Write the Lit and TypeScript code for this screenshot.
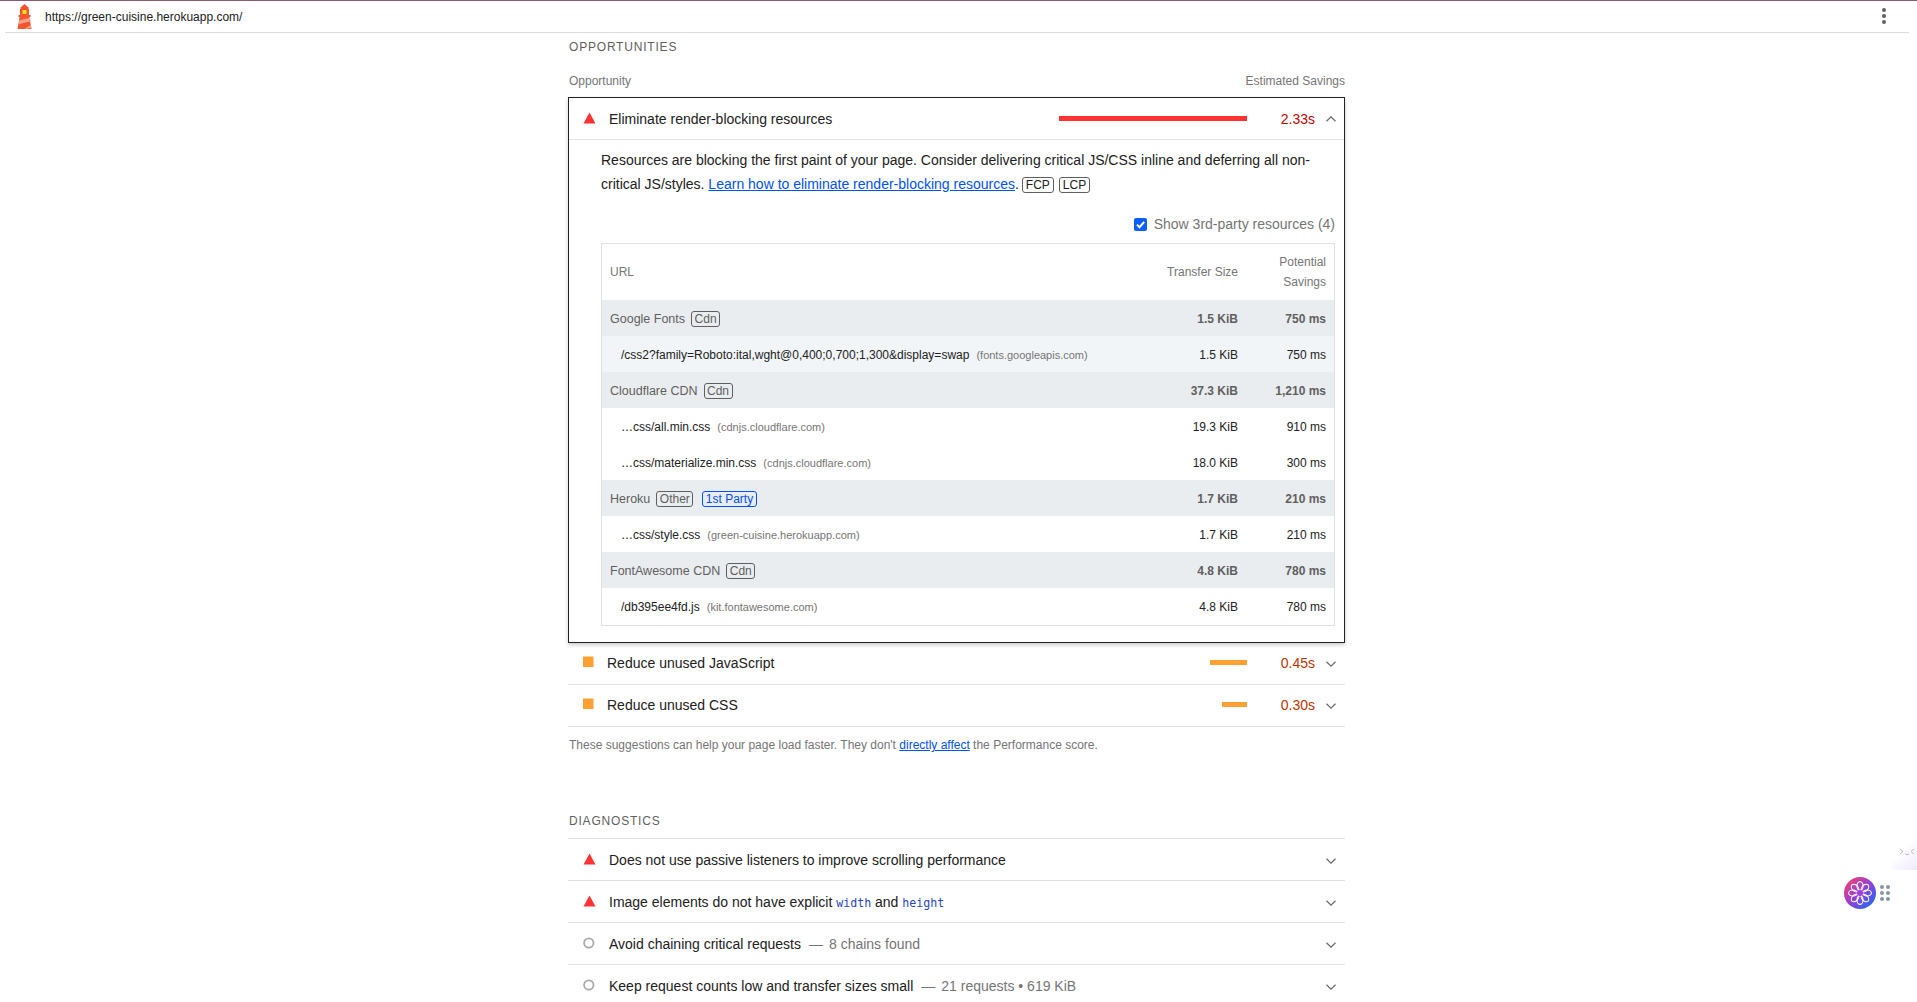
import { LitElement, html, css, svg } from 'lit';
import { customElement } from 'lit/decorators.js';

const triangle = html`<svg class="icon" width="14" height="12" viewBox="0 0 14 12"><path d="M6.5 0.5 L12.5 11.5 H0.5 Z" fill="#ff3333" /></svg>`;
const square = html`<svg class="icon" width="14" height="12" viewBox="0 0 14 12"><rect x="0" y="0.5" width="10.5" height="10.5" fill="#ffa033" /></svg>`;
const circle = html`<svg class="icon" width="14" height="12" viewBox="0 0 14 12"><circle cx="5.8" cy="6" r="4.7" fill="none" stroke="#aaaaaa" stroke-width="1.8" /></svg>`;

const chevron = (up = false) =>
  html`<svg class="chev" width="12" height="8" viewBox="0 0 12 8"><path d="${up ? 'M1.5 6.2 L6 1.8 L10.5 6.2' : 'M1.5 1.8 L6 6.2 L10.5 1.8'}" fill="none" stroke="#6a6a6a" stroke-width="1.2" /></svg>`;

interface Row {
  kind: 'group' | 'item';
  label: string;
  host?: string;
  tags?: string[];
  size: string;
  savings: string;
  hover?: boolean;
}

const rows: Row[] = [
  { kind: 'group', label: 'Google Fonts', tags: ['Cdn'], size: '1.5 KiB', savings: '750 ms' },
  { kind: 'item', label: '/css2?family=Roboto:ital,wght@0,400;0,700;1,300&display=swap', host: '(fonts.googleapis.com)', size: '1.5 KiB', savings: '750 ms', hover: true },
  { kind: 'group', label: 'Cloudflare CDN', tags: ['Cdn'], size: '37.3 KiB', savings: '1,210 ms' },
  { kind: 'item', label: '…css/all.min.css', host: '(cdnjs.cloudflare.com)', size: '19.3 KiB', savings: '910 ms' },
  { kind: 'item', label: '…css/materialize.min.css', host: '(cdnjs.cloudflare.com)', size: '18.0 KiB', savings: '300 ms' },
  { kind: 'group', label: 'Heroku', tags: ['Other', '1st Party'], size: '1.7 KiB', savings: '210 ms' },
  { kind: 'item', label: '…css/style.css', host: '(green-cuisine.herokuapp.com)', size: '1.7 KiB', savings: '210 ms' },
  { kind: 'group', label: 'FontAwesome CDN', tags: ['Cdn'], size: '4.8 KiB', savings: '780 ms' },
  { kind: 'item', label: '/db395ee4fd.js', host: '(kit.fontawesome.com)', size: '4.8 KiB', savings: '780 ms' },
];

@customElement('app-root')
export class AppRoot extends LitElement {
  static styles = css`
    :host {
      display: block;
      position: relative;
      height: 1002px;
      overflow: hidden;
      background: #fff;
      font-family: 'Liberation Sans', Arial, sans-serif;
      color: #212121;
    }
    * {
      box-sizing: border-box;
    }
    a {
      color: #0051ff;
      text-decoration: underline;
    }
    .topline {
      height: 1px;
      background: #8a5a70;
    }
    .toolbar {
      height: 32px;
      margin: 0 8px 0 5px;
      border-bottom: 1px solid #dcdcdc;
      display: flex;
      align-items: center;
      padding: 0 0 1px 11px;
      font-size: 12px;
    }
    .url {
      margin-left: 12px;
      padding-top: 2px;
      color: #212121;
    }
    .menu {
      margin-left: auto;
      margin-right: 23px;
      display: flex;
      flex-direction: column;
      gap: 2px;
    }
    .menu i {
      width: 4px;
      height: 4px;
      border-radius: 50%;
      background: #5f5f5f;
    }
    .main {
      width: 777px;
      margin-left: 568px;
    }
    .section-title {
      font-size: 12px;
      letter-spacing: 0.8px;
      color: #5f5f5f;
      line-height: 16px;
      padding-left: 1px;
    }
    .first-title {
      margin-top: 6px;
    }
    .columns {
      display: flex;
      justify-content: space-between;
      font-size: 12px;
      color: #757575;
      line-height: 16px;
      margin-top: 18px;
      height: 24px;
      padding-left: 1px;
    }
    .box {
      border: 1px solid #212121;
      box-shadow: 0 2px 4px rgba(0, 0, 0, 0.2);
      height: 546px;
    }
    .row {
      display: flex;
      align-items: center;
      height: 42px;
      font-size: 14px;
      border-bottom: 1px solid #e0e0e0;
      padding-left: 15px;
    }
    .row .icon {
      flex: none;
      margin-right: 10px;
      position: relative;
      top: -1px;
    }
    .opp .row {
      padding-bottom: 2px;
    }
    .box .row {
      height: 42px;
      padding-left: 14px;
    }
    .box .row .icon {
      margin-right: 12px;
    }
    .diag {
      border-top: 1px solid #e0e0e0;
      margin-top: 9px;
    }
    .diag .row .icon {
      margin-right: 12px;
    }
    .bar-wrap {
      margin-left: auto;
      width: 188px;
      display: flex;
      justify-content: flex-end;
    }
    .bar {
      height: 5px;
    }
    .value {
      width: 68px;
      text-align: right;
    }
    .red {
      color: #cc0000;
    }
    .orange {
      color: #c33300;
    }
    .chev {
      margin-left: auto;
      margin-right: 8px;
      flex: none;
    }
    .value + .chev {
      margin-left: 10px;
    }
    .row .chev {
      position: relative;
      top: 1px;
    }
    .box .chev {
      margin-right: 7px;
    }
    .box .value + .chev {
      margin-left: 10px;
      top: 0;
    }
    .detail {
      padding: 8px 9px 0 32px;
    }
    .desc {
      font-size: 14px;
      line-height: 24px;
      margin: 0;
      height: 48px;
    }
    .desc span.line {
      display: block;
    }
    .tag {
      display: inline-block;
      border: 1px solid #5f5f5f;
      border-radius: 3px;
      font-size: 12px;
      line-height: 14px;
      height: 16px;
      padding: 0 3px;
      color: #212121;
    }
    .desc .tag {
      margin-left: 3px;
      margin-right: 2px;
    }
    .toggle {
      display: flex;
      justify-content: flex-end;
      align-items: center;
      gap: 7px;
      font-size: 14px;
      color: #757575;
      height: 20px;
      margin-top: 18px;
    }
    .check {
      width: 13px;
      height: 13px;
      border-radius: 2px;
      background: #0b5fff;
      display: flex;
    }
    .table {
      margin-top: 9px;
      border: 1px solid #e0e0e0;
      width: 734px;
      height: 383px;
      font-size: 12px;
    }
    .thead,
    .tr {
      display: flex;
      align-items: center;
      padding-left: 8px;
    }
    .thead {
      height: 56px;
      padding-bottom: 1px;
      color: #757575;
      line-height: 20px;
    }
    .tr {
      height: 36px;
      padding-top: 1px;
    }
    .tr.group {
      background: #eaedef;
      color: #5f5f5f;
    }
    .tr.group .name {
      font-size: 12.5px;
    }
    .tr.hover {
      background: #f2f5f7;
    }
    .tr.item .name {
      padding-left: 11px;
      color: #212121;
    }
    .name {
      flex: 1;
      display: flex;
      align-items: center;
      white-space: nowrap;
    }
    .host {
      font-size: 11px;
      color: #757575;
      margin-left: 7px;
    }
    .tr .tag {
      margin-left: 6px;
      padding: 0 2.5px;
      color: #5f5f5f;
    }
    .tr .tag + .tag {
      margin-left: 9px;
    }
    .tr .tag.first {
      color: #0051ff;
      border-color: #0051ff;
    }
    .size {
      width: 100px;
      text-align: right;
      flex: none;
    }
    .save {
      width: 96px;
      padding-right: 8px;
      text-align: right;
      flex: none;
    }
    .tr.group .size,
    .tr.group .save {
      font-weight: 700;
    }
    .note {
      font-size: 12px;
      color: #757575;
      line-height: 16px;
      margin: 10px 0 0;
      height: 76px;
      padding-left: 1px;
    }
    code {
      font-family: 'DejaVu Sans Mono', monospace;
      font-size: 11.6px;
      color: #2a44c9;
    }
    .dim {
      color: #757575;
      margin-left: 8px;
    }
    .dash {
      margin-right: 6px;
    }
    .widget {
      position: absolute;
      left: 1844px;
      top: 877px;
      display: flex;
      align-items: center;
      gap: 4px;
    }
    .grip {
      display: grid;
      grid-template-columns: 4px 4px;
      gap: 2px;
    }
    .grip i {
      width: 4px;
      height: 4px;
      border-radius: 50%;
      background: #8795a1;
    }
    .peek {
      position: absolute;
      left: 1892px;
      top: 836px;
      width: 25px;
      height: 34px;
      background: linear-gradient(135deg, #ffffff 40%, #efe9fb);
    }
  `;

  private _flower() {
    const petals = [0, 45, 90, 135, 180, 225, 270, 315];
    return html`<svg width="32" height="32" viewBox="0 0 32 32">
      <defs>
        <linearGradient id="grad" x1="0.1" y1="0.1" x2="0.9" y2="0.9">
          <stop offset="0" stop-color="#ef3f78" />
          <stop offset="0.5" stop-color="#9440d6" />
          <stop offset="1" stop-color="#2468f2" />
        </linearGradient>
      </defs>
      <circle cx="16" cy="16" r="16" fill="url(#grad)" />
      ${petals.map(
        a => svg`<ellipse cx="16" cy="9" rx="3" ry="4.4" fill="none" stroke="#fff" stroke-width="1.1" transform="rotate(${a} 16 16)" />`
      )}
      <circle cx="16" cy="16" r="3" fill="#a13cd6" />
    </svg>`;
  }

  private _lighthouse() {
    return html`<svg width="17" height="25" viewBox="0 0 17 25">
      <path d="M8.5 0 L12.5 3.5 V5 H4.5 V3.5 Z" fill="#f4552f" />
      <rect x="4" y="5" width="9" height="6" fill="#f4552f" />
      <rect x="6.5" y="6" width="4" height="4" fill="#ffe11a" />
      <rect x="2.5" y="11" width="12" height="2" fill="#f4552f" />
      <path d="M3.6 13 H13.4 L15.5 25 H1.5 Z" fill="#f4552f" />
      <path d="M3.2 16.5 L14 13.8 L14.6 17.2 L2.6 20.2 Z M14.9 21 L15.5 24 L8 24.9 Z" fill="#ffa08a" />
    </svg>`;
  }

  private _table() {
    return html`<div class="table">
      <div class="thead">
        <div class="name">URL</div>
        <div class="size">Transfer Size</div>
        <div class="save">Potential<br />Savings</div>
      </div>
      ${rows.map(
        r => html`<div class="tr ${r.kind} ${r.hover ? 'hover' : ''}">
          <div class="name">
            ${r.label}
            ${r.host ? html`<span class="host">${r.host}</span>` : ''}
            ${(r.tags || []).map(t => html`<span class="tag ${t === '1st Party' ? 'first' : ''}">${t}</span>`)}
          </div>
          <div class="size">${r.size}</div>
          <div class="save">${r.savings}</div>
        </div>`
      )}
    </div>`;
  }

  render() {
    return html`
      <div class="topline"></div>
      <div class="toolbar">
        ${this._lighthouse()}
        <span class="url">https://green-cuisine.herokuapp.com/</span>
        <div class="menu"><i></i><i></i><i></i></div>
      </div>
      <div class="main">
        <div class="section-title first-title">OPPORTUNITIES</div>
        <div class="columns"><span>Opportunity</span><span>Estimated Savings</span></div>
        <div class="box">
          <div class="row">
            ${triangle}
            <span>Eliminate render-blocking resources</span>
            <div class="bar-wrap"><div class="bar" style="width:188px;background:#ff3333"></div></div>
            <span class="value red">2.33s</span>
            ${chevron(true)}
          </div>
          <div class="detail">
            <p class="desc">
              <span class="line">Resources are blocking the first paint of your page. Consider delivering critical JS/CSS inline and deferring all non-</span>
              <span class="line">critical JS/styles. <a href="#">Learn how to eliminate render-blocking resources</a>.<span class="tag">FCP</span><span class="tag">LCP</span></span>
            </p>
            <div class="toggle">
              <span class="check">
                <svg width="13" height="13" viewBox="0 0 13 13"><path d="M3 6.6 L5.5 9.2 L10.2 3.8" fill="none" stroke="#fff" stroke-width="2" /></svg>
              </span>
              <span>Show 3rd-party resources (4)</span>
            </div>
            ${this._table()}
          </div>
        </div>
        <div class="opp">
          <div class="row">
            ${square}
            <span>Reduce unused JavaScript</span>
            <div class="bar-wrap"><div class="bar" style="width:37px;background:#ffa033"></div></div>
            <span class="value orange">0.45s</span>
            ${chevron()}
          </div>
          <div class="row">
            ${square}
            <span>Reduce unused CSS</span>
            <div class="bar-wrap"><div class="bar" style="width:25px;background:#ffa033"></div></div>
            <span class="value orange">0.30s</span>
            ${chevron()}
          </div>
        </div>
        <p class="note">
          These suggestions can help your page load faster. They don't <a href="#">directly affect</a> the Performance
          score.
        </p>
        <div class="section-title">DIAGNOSTICS</div>
        <div class="diag">
          <div class="row">${triangle}<span>Does not use passive listeners to improve scrolling performance</span>${chevron()}</div>
          <div class="row">${triangle}<span>Image elements do not have explicit <code>width</code> and <code>height</code></span>${chevron()}</div>
          <div class="row">${circle}<span>Avoid chaining critical requests</span><span class="dim"><span class="dash">—</span>8 chains found</span>${chevron()}</div>
          <div class="row">${circle}<span>Keep request counts low and transfer sizes small</span><span class="dim"><span class="dash">—</span>21 requests • 619 KiB</span>${chevron()}</div>
        </div>
      </div>
      <div class="peek">
        <svg width="25" height="34" viewBox="0 0 25 34"><path d="M8 13 L11 15.5 L8 18 M13 18 Q15 19.5 17 18 M22 13 L19 15.5 L22 18" fill="none" stroke="#b9bcc4" stroke-width="1" /></svg>
      </div>
      <div class="widget">
        ${this._flower()}
        <div class="grip"><i></i><i></i><i></i><i></i><i></i><i></i></div>
      </div>
    `;
  }
}
